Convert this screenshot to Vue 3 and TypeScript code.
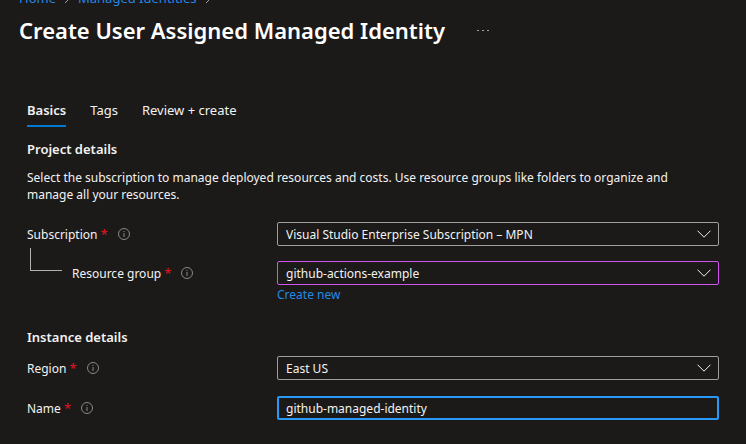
<script setup lang="ts">
import { ref } from 'vue'

const tabs = ['Basics', 'Tags', 'Review + create']
const activeTab = ref('Basics')
const subscription = ref('Visual Studio Enterprise Subscription – MPN')
const resourceGroup = ref('github-actions-example')
const region = ref('East US')
const name = ref('github-managed-identity')
</script>

<template>
  <div class="blade">
    <nav class="breadcrumb" aria-label="Breadcrumb">
      <a href="#">Home</a>
      <svg class="crumb" viewBox="0 0 6 10" aria-hidden="true"><path d="M1 1l4 4-4 4" /></svg>
      <a href="#">Managed Identities</a>
      <svg class="crumb" viewBox="0 0 6 10" aria-hidden="true"><path d="M1 1l4 4-4 4" /></svg>
    </nav>
    <header class="title-bar">
      <h1>Create User Assigned Managed Identity</h1>
      <button class="more" type="button" aria-label="More actions">
        <svg viewBox="0 0 12 2" aria-hidden="true"><path d="M0 1h2v1H0zM5 1h2v1H5zM10 1h2v1h-2z" /></svg>
      </button>
    </header>

    <main class="content">
      <div class="tabs" role="tablist">
        <button
          v-for="tab in tabs"
          :key="tab"
          type="button"
          role="tab"
          class="tab"
          :class="{ active: tab === activeTab }"
          :aria-selected="tab === activeTab"
          @click="activeTab = tab"
        >
          {{ tab }}
        </button>
      </div>

      <h2>Project details</h2>
      <p class="intro">
        Select the subscription to manage deployed resources and costs. Use resource groups like folders to organize and
        manage all your resources.
      </p>

      <div class="row parent-row">
        <div class="label">
          <label for="subscription">Subscription <span class="req">*</span></label>
          <svg class="info" viewBox="0 0 12 12" aria-hidden="true"><circle cx="6" cy="6" r="5.5" /><path d="M6 5v4M6 3v1" /></svg>
        </div>
        <div class="picker">
          <select id="subscription" v-model="subscription" class="field">
            <option>Visual Studio Enterprise Subscription – MPN</option>
          </select>
          <svg class="chevron" viewBox="0 0 14 8" aria-hidden="true"><path d="M.5 .7L7 7.2 13.5 .7" /></svg>
        </div>
      </div>

      <div class="row">
        <div class="label">
          <span class="branch"></span>
          <label for="group">Resource group <span class="req">*</span></label>
          <svg class="info" viewBox="0 0 12 12" aria-hidden="true"><circle cx="6" cy="6" r="5.5" /><path d="M6 5v4M6 3v1" /></svg>
        </div>
        <div class="picker">
          <select id="group" v-model="resourceGroup" class="field edited">
            <option>github-actions-example</option>
          </select>
          <svg class="chevron" viewBox="0 0 14 8" aria-hidden="true"><path d="M.5 .7L7 7.2 13.5 .7" /></svg>
        </div>
        <a class="create" href="#">Create new</a>
      </div>

      <h2 class="instance">Instance details</h2>

      <div class="row">
        <div class="label">
          <label for="region">Region <span class="req">*</span></label>
          <svg class="info" viewBox="0 0 12 12" aria-hidden="true"><circle cx="6" cy="6" r="5.5" /><path d="M6 5v4M6 3v1" /></svg>
        </div>
        <div class="picker">
          <select id="region" v-model="region" class="field">
            <option>East US</option>
          </select>
          <svg class="chevron" viewBox="0 0 14 8" aria-hidden="true"><path d="M.5 .7L7 7.2 13.5 .7" /></svg>
        </div>
      </div>

      <div class="row">
        <div class="label">
          <label for="name">Name <span class="req">*</span></label>
          <svg class="info" viewBox="0 0 12 12" aria-hidden="true"><circle cx="6" cy="6" r="5.5" /><path d="M6 5v4M6 3v1" /></svg>
        </div>
        <input id="name" v-model="name" class="field focused" type="text" spellcheck="false" />
      </div>
    </main>
  </div>
</template>

<style>
body {
  background: #1b1a19;
}
</style>

<style scoped>
.blade {
  overflow: hidden;
  color: #f3f2f1;
  font-family: 'Noto Sans', sans-serif;
  font-size: 12px;
  line-height: 17px;
}
a {
  color: #2488e5;
  text-decoration: none;
}
button {
  padding: 0;
  border: 0;
  background: none;
  color: inherit;
  font: inherit;
}
h1,
h2,
p {
  margin: 0;
}
.breadcrumb {
  display: flex;
  align-items: center;
  gap: 8px;
  margin-top: -10px;
  padding-left: 19px;
  font-size: 13px;
}
.crumb {
  width: 6px;
  height: 10px;
  fill: none;
  stroke: #a19f9d;
}
.title-bar {
  display: flex;
  align-items: center;
  gap: 32px;
  padding: 7px 19px 0;
}
h1 {
  font-size: 22px;
  font-weight: 600;
  line-height: 32px;
  color: #fff;
}
.more {
  display: flex;
}
.more svg {
  width: 12px;
  height: 2px;
  fill: #a19f9d;
}
.content {
  padding: 53px 27px 20px;
}
.tabs {
  display: flex;
  gap: 24px;
  font-size: 13px;
}
.tab {
  padding: 3px 0 6px;
  border-bottom: 2px solid transparent;
}
.tab.active {
  border-color: #0078d4;
  font-weight: 600;
}
h2 {
  margin-top: 14px;
  font-size: 13px;
  font-weight: 600;
}
.intro {
  margin: 11px 0 19px;
  padding-right: 24px;
}
.row {
  display: grid;
  grid-template-columns: 250px minmax(0, 1fr);
  align-items: center;
  margin-bottom: 16px;
}
.parent-row {
  margin-bottom: 15px;
}
.label {
  display: flex;
  align-items: center;
  gap: 10px;
}
.req {
  color: #e81123;
  font-size: 13px;
}
.info {
  width: 12px;
  height: 12px;
  fill: none;
  stroke: #8a8886;
}
.branch {
  box-sizing: border-box;
  align-self: flex-start;
  width: 32px;
  height: 23px;
  margin: -17px 0 0 3px;
  border: solid #b3b0ad;
  border-width: 0 0 1px 1px;
}
.picker {
  display: grid;
  align-items: center;
}
.picker > * {
  grid-area: 1 / 1;
}
.field {
  box-sizing: border-box;
  width: 100%;
  height: 24px;
  margin: 0;
  padding: 0 8px;
  border: 1px solid #a19f9d;
  border-radius: 2px;
  outline: 0;
  background: #1b1a19;
  color: inherit;
  font: inherit;
  appearance: none;
}
.edited {
  border-color: #d154f0;
}
.focused {
  padding: 0 7px;
  border: 2px solid #2899f5;
}
.chevron {
  justify-self: end;
  width: 14px;
  height: 8px;
  margin-right: 8px;
  fill: none;
  stroke: #f3f2f1;
  pointer-events: none;
}
.create {
  grid-column: 2;
  justify-self: start;
  margin-top: 1px;
}
.instance {
  margin: 26px 0 10px;
}
</style>
